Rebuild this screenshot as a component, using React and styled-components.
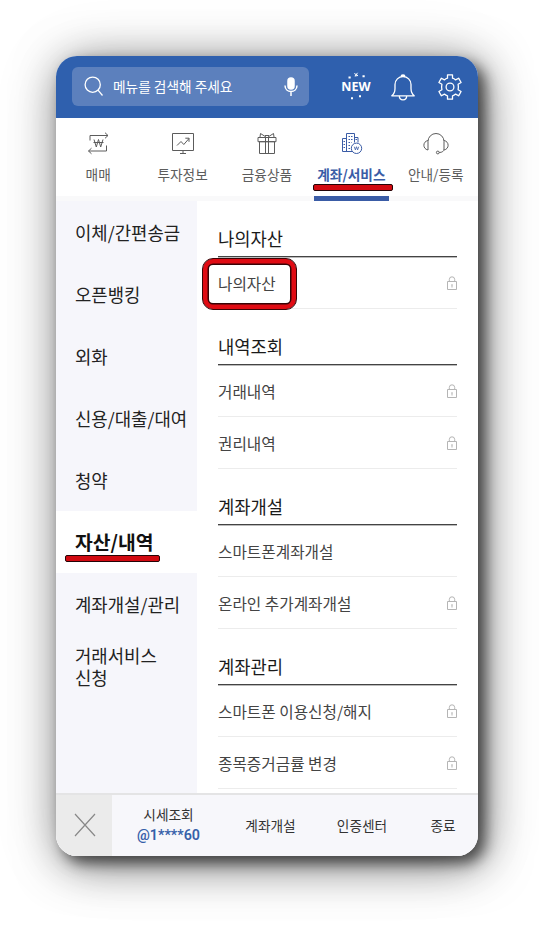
import styled, { createGlobalStyle } from 'styled-components';

const GlobalStyle = createGlobalStyle`
    * {
        box-sizing: border-box;
    }
    body {
        margin: 0;
        background: #fff;
        font-family: 'Noto Sans CJK KR', sans-serif;
    }
    ul {
        margin: 0;
        padding: 0;
        list-style: none;
    }
`;

const Page = styled.div`
    width: 548px;
    height: 926px;
    padding: 56px;
    overflow: hidden;
`;

const Phone = styled.div`
    display: flex;
    flex-direction: column;
    width: 422px;
    height: 800px;
    border-radius: 21px;
    background: #fff;
    box-shadow: 7px 7px 14px rgba(0, 0, 0, 0.58), 6px 8px 46px rgba(0, 0, 0, 0.54), 0 4px 70px rgba(0, 0, 0, 0.1);
`;

const Header = styled.header`
    display: flex;
    align-items: center;
    flex: none;
    height: 62px;
    padding: 0 16px 1px 16px;
    border-radius: 21px 21px 0 0;
    background: #2f60ae;
    color: #fff;
`;

const SearchBox = styled.div`
    display: flex;
    align-items: center;
    width: 237px;
    height: 39px;
    padding: 0 11px 0 12px;
    border-radius: 6px;
    background: #5c80bd;
`;

const Placeholder = styled.span`
    flex: 1;
    margin: -2px 0 0 9px;
    font-size: 13.7px;
    line-height: 20px;
    white-space: nowrap;
`;

const HeaderIcons = styled.div`
    display: flex;
    align-items: center;
    flex: 1;
    margin-left: 31px;
`;

const Icon = styled.svg`
    display: block;
    flex: none;
    overflow: visible;
    fill: none;
    stroke: currentColor;
    stroke-width: ${({ $stroke }) => $stroke || 1};
`;

const NewBadge = styled.div`
    display: flex;
    flex-direction: column;
    align-items: center;
    width: 32px;
    height: 28px;
    margin-right: 19px;
    font-family: 'Noto Sans', sans-serif;
    font-size: 12.5px;
    font-weight: 700;
    line-height: 14px;
    letter-spacing: 0.1px;
`;

const Tabs = styled.nav`
    display: flex;
    flex: none;
    height: 83px;
    border-bottom: 5px solid #f9f9fa;
`;

const Tab = styled.div`
    position: relative;
    display: flex;
    flex-direction: column;
    align-items: center;
    width: 84.4px;
    padding-top: 13px;
    color: ${({ $active }) => ($active ? '#3a5ca6' : '#5c5c5c')};

    &::after {
        content: '';
        display: ${({ $active }) => ($active ? 'block' : 'none')};
        position: absolute;
        bottom: -5px;
        left: 5px;
        width: 75px;
        height: 5px;
        background: #3a5ca6;
    }
`;

const TabLabel = styled.span`
    margin-top: 9px;
    font-size: 13.7px;
    font-weight: ${({ $active }) => ($active ? 700 : 400)};
    line-height: 20px;
    white-space: nowrap;
`;

const Body = styled.div`
    display: flex;
    flex: 1;
    min-height: 0;
`;

const Sidebar = styled.ul`
    width: 141px;
    background: #f6f6fb;
`;

const SideItem = styled.li`
    position: relative;
    display: flex;
    align-items: center;
    height: 62px;
    padding-left: 19px;
    background: ${({ $active }) => ($active ? '#fff' : 'transparent')};
    color: ${({ $active }) => ($active ? '#111' : '#222')};
    font-size: ${({ $active }) => ($active ? 19.3 : 17.8)}px;
    font-weight: ${({ $active }) => ($active ? 700 : 400)};
    line-height: 22px;
    white-space: pre;
`;

const Content = styled.main`
    flex: 1;
    padding: 0 21px;
    overflow: hidden;
`;

const SectionTitle = styled.h2`
    height: 56px;
    margin: 0;
    padding-top: 24px;
    border-bottom: 1px solid #444;
    box-shadow: 0 1px #bbb;
    color: #1a1a1a;
    font-size: 17.7px;
    font-weight: 400;
    line-height: 26px;
`;

const MenuRow = styled.li`
    display: flex;
    align-items: center;
    justify-content: space-between;
    height: 52px;
    padding-top: 1px;
    border-bottom: 1px solid #ececec;
    color: #444;
    font-size: 15.7px;
    line-height: 24px;

    svg {
        color: #b5b5b5;
    }
`;

const MenuLabel = styled.span`
    position: relative;
    padding-top: 1px;
`;

// thick red marker below a label
const RedBar = styled.i`
    position: absolute;
    left: ${({ $left }) => $left}px;
    top: ${({ $top }) => $top}px;
    width: ${({ $width }) => $width}px;
    height: 7px;
    border: 1px solid #240406;
    border-radius: 2px;
    background: #d20a11;
`;

const RedFrame = styled.i`
    position: absolute;
    left: -16px;
    top: -13px;
    width: 95px;
    height: 52px;
    border: 1.5px solid #3a0306;
    border-radius: 11px;
    box-shadow: inset 0 0 0 4.5px #e00b13, inset 0 0 0 6px #3a0306;
`;

const Footer = styled.footer`
    display: flex;
    flex: none;
    height: 63px;
    border-top: 2px solid #e4e4e5;
    border-radius: 0 0 21px 21px;
    background: #f7f7fb;
    color: #333;
    font-size: 13.7px;
    line-height: 20px;
    overflow: hidden;
`;

const CloseButton = styled.div`
    display: flex;
    align-items: center;
    justify-content: center;
    width: 56px;
    padding: 0 0 1px 2px;
    background: #ebebeb;
    color: #888;
`;

const FooterItem = styled.div`
    display: flex;
    flex-direction: column;
    align-items: center;
    justify-content: center;
    width: ${({ $width }) => $width}px;
    padding-bottom: 2px;
    white-space: nowrap;
`;

const UserId = styled.span`
    margin-top: 1px;
    color: #365fa9;
    font-family: Roboto, sans-serif;
    font-size: 14.3px;
    font-weight: 600;
    line-height: 21px;
`;

const SearchIcon = () => (
    <Icon width="20" height="21" viewBox="0 0 20 21" $stroke={1.3}>
        <circle cx="8.7" cy="8.7" r="7.6" />
        <path d="M14 14.2 18.5 19.5" />
    </Icon>
);

const MicIcon = () => (
    <Icon width="14" height="20" viewBox="0 0 14 20" $stroke={1.5}>
        <rect x="4" y="1" width="6" height="11" rx="3" fill="currentColor" />
        <path d="M1 8.5c0 8 12 8 12 0M7 14.5V19" />
    </Icon>
);

const BellIcon = () => (
    <Icon width="24" height="28" viewBox="0 0 24 28" $stroke={1.3} strokeLinejoin="round">
        <path d="M.8 22.800c2.300-2 3.200-4 3.200-7.300v-4a8 8 0 0 1 16 0v4c0 3.300.9 5.300 3.200 7.300ZM10 3.700c.2-2.300 3.800-2.300 4 0M8.300 22.800c0 5.500 7.400 5.500 7.400 0" />
    </Icon>
);

const GearIcon = () => (
    <Icon width="24" height="26" viewBox="0 0 24 26" $stroke={1.3} strokeLinejoin="round" style={undefined}>
        <path d="M9.500.8h5v3.400c1.200.3 2.200.9 3.100 1.700l3-1.700 2.500 4.300-3 1.800c.4 1.800.4 3.600 0 5.400l3 1.800-2.500 4.300-3-1.700c-.9.800-1.900 1.400-3.100 1.700v3.400h-5v-3.400c-1.200-.3-2.200-.9-3.100-1.700l-3 1.700L.9 17.500l3-1.800c-.4-1.800-.4-3.600 0-5.400l-3-1.800 2.500-4.300 3 1.700c.9-.8 1.900-1.400 3.100-1.700Z" />
        <circle cx="12" cy="13" r="3.900" />
    </Icon>
);

const SparkTop = () => (
    <Icon width="24" height="7" viewBox="0 0 24 7">
        <path d="M10.300.5l3.500 2M13.600-.2l-2.800 3.400M11 3l3-.5" />
        <path d="M4.500 4.500h2.200M18.500 3.300h2.200" strokeWidth="2" />
    </Icon>
);

const SparkBottom = () => (
    <Icon width="24" height="6" viewBox="0 0 24 6">
        <path d="M7 4.200h2M15 2.200h2" strokeWidth="2" />
    </Icon>
);

const TradeIcon = () => (
    <Icon width="24" height="24" viewBox="0 0 24 24">
        <path d="M4 9.500V4.500h18M19 1.700l3 2.800-3 2.800M20.500 14.500V20H2.500M5.500 17.200l-3 2.800 3 2.800" />
        <path d="m8 8.500 2.300 7.500 2.200-7.500 2.200 7.500L17 8.500M7.500 11.500h10" />
    </Icon>
);

const ChartIcon = () => (
    <Icon width="24" height="24" viewBox="0 0 24 24">
        <path d="M1.500 2.500h21v17h-21ZM12 19.500v3M9 22.500h6" />
        <path d="m6 14.500 4-4 2.800 3 5.200-6M14.300 7.200H18v3.600" />
    </Icon>
);

const GiftIcon = () => (
    <Icon width="24" height="24" viewBox="0 0 24 24">
        <path d="M3 6.500h18v4.200H3ZM4.500 10.700h15v11.800h-15ZM10.500 6.500v16M13.500 6.500v16" />
        <path d="M11 6 5.500 2.500 5 6M13 6l5.500-3.500L19 6M10 4.500h4" />
    </Icon>
);

const BankIcon = () => (
    <Icon width="24" height="24" viewBox="0 0 24 24">
        <path d="M13 20.500H3.500V7.500h4M7.500 20.500v-18h8v9M15.500 6.500h3.500v5" />
        <path d="M9.500 5.500h4M9.500 8.500h4M9.500 11.500h3M9.500 14.500h2M9.500 17.500h2M4.500 10.500H6M4.500 13.500H6M4.500 16.500H6M16.500 8.500H18" strokeDasharray="1.5 1" />
        <circle cx="17.500" cy="17.300" r="5.200" />
        <path d="m15.300 15.700 1.100 3.200 1.100-3.200 1.100 3.200 1.100-3.200" strokeWidth=".8" />
    </Icon>
);

const HeadsetIcon = () => (
    <Icon width="26" height="24" viewBox="0 0 26 24">
        <path d="M5 19V10.500a8 8 0 0 1 16 0V18c0 2.200-1.800 3.500-4.800 3.500M5 9.500c-5.500 1-5.500 8.500 0 9.500M21 9.500c5.500 1 5.500 8.500 0 9.500" />
        <circle cx="14.800" cy="21.500" r="1.400" />
    </Icon>
);

const LockIcon = () => (
    <Icon width="10" height="14" viewBox="0 0 10 14">
        <path d="M.5 5.500h9v8h-9ZM2.300 5.500V3.500a2.700 2.700 0 0 1 5.400 0v2M5 9v2.500M4.300 8.800h1.400" />
    </Icon>
);

const CloseIcon = () => (
    <Icon width="22" height="24" viewBox="0 0 22 24" $stroke={1.2}>
        <path d="m1 1 20 22M21 1 1 23" />
    </Icon>
);

const BellButton = styled.div`
    margin-right: 23px;
`;

const tabs = [
    { label: '매매', icon: TradeIcon },
    { label: '투자정보', icon: ChartIcon },
    { label: '금융상품', icon: GiftIcon },
    { label: '계좌/서비스', icon: BankIcon, active: true },
    { label: '안내/등록', icon: HeadsetIcon },
];

const sideItems = [
    '이체/간편송금',
    '오픈뱅킹',
    '외화',
    '신용/대출/대여',
    '청약',
    '자산/내역',
    '계좌개설/관리',
    '거래서비스\n신청',
];

const sections = [
    { title: '나의자산', rows: [{ label: '나의자산', locked: true, framed: true }] },
    {
        title: '내역조회',
        rows: [
            { label: '거래내역', locked: true },
            { label: '권리내역', locked: true },
        ],
    },
    {
        title: '계좌개설',
        rows: [{ label: '스마트폰계좌개설' }, { label: '온라인 추가계좌개설', locked: true }],
    },
    {
        title: '계좌관리',
        rows: [
            { label: '스마트폰 이용신청/해지', locked: true },
            { label: '종목증거금률 변경', locked: true },
        ],
    },
];

export default function App() {
    return (
        <Page>
            <GlobalStyle />
            <Phone>
                <Header>
                    <SearchBox>
                        <SearchIcon />
                        <Placeholder>메뉴를 검색해 주세요</Placeholder>
                        <MicIcon />
                    </SearchBox>
                    <HeaderIcons>
                        <NewBadge>
                            <SparkTop />
                            NEW
                            <SparkBottom />
                        </NewBadge>
                        <BellButton>
                            <BellIcon />
                        </BellButton>
                        <GearIcon />
                    </HeaderIcons>
                </Header>
                <Tabs>
                    {tabs.map(({ label, icon: TabIcon, active }) => (
                        <Tab key={label} $active={active}>
                            <TabIcon />
                            <TabLabel $active={active}>{label}</TabLabel>
                            {active && <RedBar $left={4} $top={66} $width={80} />}
                        </Tab>
                    ))}
                </Tabs>
                <Body>
                    <Sidebar>
                        {sideItems.map((item) => (
                            <SideItem key={item} $active={item === '자산/내역'}>
                                {item}
                                {item === '자산/내역' && <RedBar $left={9} $top={44} $width={95} />}
                            </SideItem>
                        ))}
                    </Sidebar>
                    <Content>
                        {sections.map(({ title, rows }) => (
                            <section key={title}>
                                <SectionTitle>{title}</SectionTitle>
                                <ul>
                                    {rows.map(({ label, locked, framed }) => (
                                        <MenuRow key={label}>
                                            <MenuLabel>
                                                {label}
                                                {framed && <RedFrame />}
                                            </MenuLabel>
                                            {locked && <LockIcon />}
                                        </MenuRow>
                                    ))}
                                </ul>
                            </section>
                        ))}
                    </Content>
                </Body>
                <Footer>
                    <CloseButton>
                        <CloseIcon />
                    </CloseButton>
                    <FooterItem $width={113}>
                        시세조회
                        <UserId>@1****60</UserId>
                    </FooterItem>
                    <FooterItem $width={91}>계좌개설</FooterItem>
                    <FooterItem $width={92}>인증센터</FooterItem>
                    <FooterItem $width={70}>종료</FooterItem>
                </Footer>
            </Phone>
        </Page>
    );
}
